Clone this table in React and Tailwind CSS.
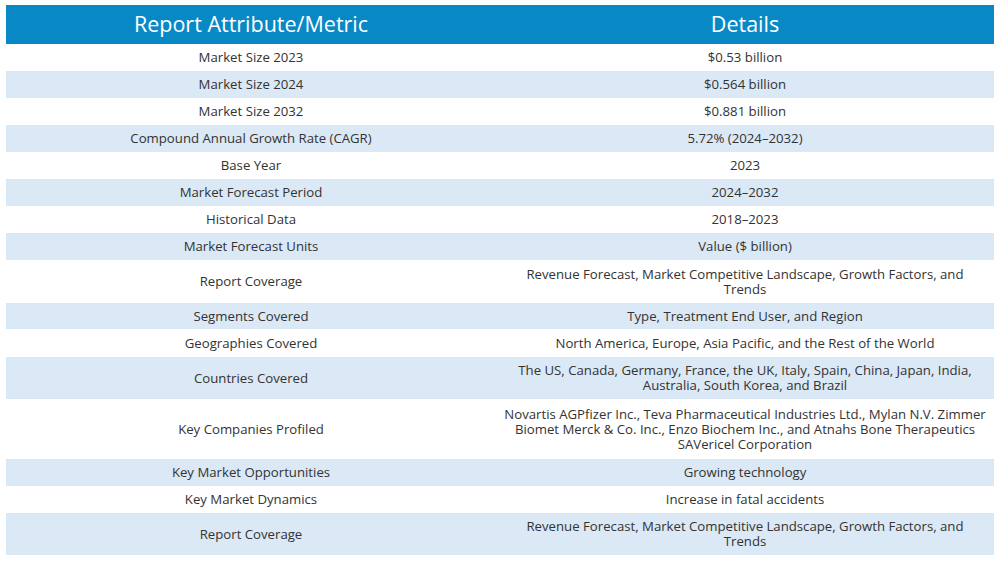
const rows = [
  { h: "h-[27px]", k: "Market Size 2023", v: ["$0.53 billion"] },
  { h: "h-[27px]", k: "Market Size 2024", v: ["$0.564 billion"] },
  { h: "h-[27px]", k: "Market Size 2032", v: ["$0.881 billion"] },
  { h: "h-[27px]", k: "Compound Annual Growth Rate (CAGR)", v: ["5.72% (2024–2032)"] },
  { h: "h-[27px]", k: "Base Year", v: ["2023"] },
  { h: "h-[27px]", k: "Market Forecast Period", v: ["2024–2032"] },
  { h: "h-[27px]", k: "Historical Data", v: ["2018–2023"] },
  { h: "h-[27px]", k: "Market Forecast Units", v: ["Value ($ billion)"] },
  { h: "h-[43px]", k: "Report Coverage", v: ["Revenue Forecast, Market Competitive Landscape, Growth Factors, and", "Trends"] },
  { h: "h-[26px]", k: "Segments Covered", v: ["Type, Treatment End User, and Region"] },
  { h: "h-[28px]", k: "Geographies Covered", v: ["North America, Europe, Asia Pacific, and the Rest of the World"] },
  { h: "h-[42px]", k: "Countries Covered", v: ["The US, Canada, Germany, France, the UK, Italy, Spain, China, Japan, India,", "Australia, South Korea, and Brazil"] },
  { h: "h-[60px]", k: "Key Companies Profiled", v: ["Novartis AGPfizer Inc., Teva Pharmaceutical Industries Ltd., Mylan N.V. Zimmer", "Biomet Merck & Co. Inc., Enzo Biochem Inc., and Atnahs Bone Therapeutics", "SAVericel Corporation"] },
  { h: "h-[27px]", k: "Key Market Opportunities", v: ["Growing technology"] },
  { h: "h-[27px]", k: "Key Market Dynamics", v: ["Increase in fatal accidents"] },
  { h: "h-[42px]", k: "Report Coverage", v: ["Revenue Forecast, Market Competitive Landscape, Growth Factors, and", "Trends"] },
];

export default function App() {
  return (
    <div className="w-[1000px] h-[562px] bg-white pt-[5px] px-[6px]" style={{ fontFamily: '"Open Sans", "Liberation Sans", sans-serif' }}>
      <div className="grid grid-cols-[490px_498px] h-[39px] bg-[#0889c6] text-white text-[21.5px]">
        <div className="flex items-center justify-center">Report Attribute/Metric</div>
        <div className="flex items-center justify-center">Details</div>
      </div>
      {rows.map((r, i) => (
        <div
          key={i}
          className={`grid grid-cols-[490px_498px] ${r.h} ${i % 2 === 1 ? "bg-[#dbe8f5]" : "bg-white"} text-[#333333] text-[13.2px] leading-[15px]`}
        >
          <div className="flex items-center justify-center text-center">{r.k}</div>
          <div className="flex flex-col items-center justify-center text-center">
            {r.v.map((line, j) => (
              <span key={j} className="whitespace-nowrap">{line}</span>
            ))}
          </div>
        </div>
      ))}
    </div>
  );
}
